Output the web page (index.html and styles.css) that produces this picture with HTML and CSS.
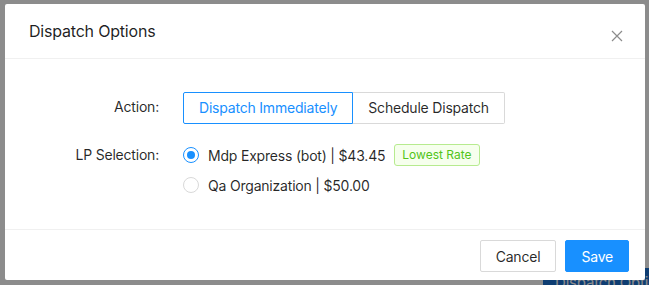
FILE: index.html
```html
<!DOCTYPE html>
<html>
<head>
<meta charset="utf-8">
<link rel="stylesheet" href="styles.css">
</head>
<body>
<div class="page-btn">Dispatch Optio</div>
<div class="backdrop"></div>
<div class="modal">
  <div class="modal-header">
    <div class="modal-title">Dispatch Options</div>
    <svg class="close" width="12" height="12" viewBox="0 0 12 12"><path d="M1 1L11 11M11 1L1 11" stroke="#8c8c8c" stroke-width="1.2" fill="none"/></svg>
  </div>
  <div class="modal-body">
    <div class="form-row action-row">
      <div class="label">Action:</div>
      <div class="seg">
        <div class="seg-btn active">Dispatch Immediately</div>
        <div class="seg-btn">Schedule Dispatch</div>
      </div>
    </div>
    <div class="form-row lp-row">
      <div class="label lp-label">LP Selection:</div>
      <div class="radios">
        <div class="radio-line"><span class="radio checked"></span><span class="radio-text">Mdp Express (bot) | $43.45</span><span class="tag">Lowest Rate</span></div>
        <div class="radio-line"><span class="radio"></span><span class="radio-text">Qa Organization | $50.00</span></div>
      </div>
    </div>
  </div>
  <div class="modal-footer">
    <button class="btn">Cancel</button>
    <button class="btn primary">Save</button>
  </div>
</div>
</body>
</html>
```

FILE: styles.css
```css
html, body {
  margin: 0;
  padding: 0;
  width: 649px;
  height: 285px;
  overflow: hidden;
  font-family: Inter, "Noto Sans", sans-serif;
  font-size: 14px;
  letter-spacing: -0.2px;
  color: rgba(0, 0, 0, 0.85);
  background: #fff;
}
.page-btn {
  position: absolute;
  left: 543px;
  top: 268px;
  width: 106px;
  height: 30px;
  overflow: hidden;
  background: #1a6fd0;
  color: #fff;
  font-size: 15px;
  padding: 0 0 0 12px;
  line-height: 30px;
  box-sizing: border-box;
  white-space: nowrap;
}
.backdrop {
  position: absolute;
  inset: 0;
  background: rgba(0, 0, 0, 0.45);
}
.modal {
  position: absolute;
  left: 5px;
  top: 4px;
  width: 640px;
  height: 276px;
  background: #fff;
  border-radius: 2px;
  display: flex;
  flex-direction: column;
}
.modal-header {
  height: 54px;
  border-bottom: 1px solid #f0f0f0;
  display: flex;
  align-items: center;
  justify-content: space-between;
  padding: 0 22px 0 24px;
  box-sizing: content-box;
}
.modal-title {
  font-size: 16px;
  font-weight: 400;
  line-height: 22px;
  margin-top: -1px;
  color: rgba(0, 0, 0, 0.88);
}
.close {
  margin-top: 10px;
}
.modal-body {
  flex: 1;
  padding: 33px 24px 0 24px;
}
.form-row {
  display: grid;
  grid-template-columns: 130px auto;
  column-gap: 24px;
}
.label {
  text-align: right;
  line-height: 32px;
  white-space: nowrap;
}
.action-row .label { line-height: 30px; }
.lp-row {
  margin-top: 16px;
}
.lp-label { line-height: 30px; }
.seg {
  display: flex;
}
.seg-btn {
  height: 32px;
  box-sizing: border-box;
  border: 1px solid #d9d9d9;
  padding: 0 15px;
  line-height: 30px;
  white-space: nowrap;
}
.seg-btn.active {
  border-color: #1890ff;
  color: #1890ff;
  border-radius: 2px 0 0 2px;
}
.seg-btn + .seg-btn {
  border-left: none;
  border-radius: 0 2px 2px 0;
}
.radios {
  display: flex;
  flex-direction: column;
}
.radio-line {
  height: 30px;
  display: flex;
  align-items: center;
}
.radio {
  width: 16px;
  height: 16px;
  box-sizing: border-box;
  border: 1px solid #d9d9d9;
  border-radius: 50%;
  position: relative;
  margin-right: 9px;
}
.radio.checked {
  border-color: #1890ff;
}
.radio.checked::after {
  content: "";
  position: absolute;
  left: 3px;
  top: 3px;
  width: 8px;
  height: 8px;
  border-radius: 50%;
  background: #1890ff;
}
.tag {
  margin-left: 9px;
  height: 22px;
  box-sizing: border-box;
  border: 1px solid #b7eb8f;
  background: #f6ffed;
  color: #52c41a;
  font-size: 12px;
  line-height: 20px;
  padding: 0 7px;
  border-radius: 3px;
  letter-spacing: 0;
}
.modal-footer {
  height: 51px;
  border-top: 1px solid #f0f0f0;
  display: flex;
  justify-content: flex-end;
  align-items: flex-start;
  padding: 10px 16px 0 0;
  box-sizing: border-box;
  gap: 9px;
}
.btn {
  height: 32px;
  padding: 0 15px;
  font-family: Inter, "Noto Sans", sans-serif;
  font-size: 14px;
  letter-spacing: -0.2px;
  border: 1px solid #d9d9d9;
  background: #fff;
  color: rgba(0, 0, 0, 0.85);
  border-radius: 2px;
}
.btn.primary {
  background: #1890ff;
  border-color: #1890ff;
  color: #fff;
}
```
